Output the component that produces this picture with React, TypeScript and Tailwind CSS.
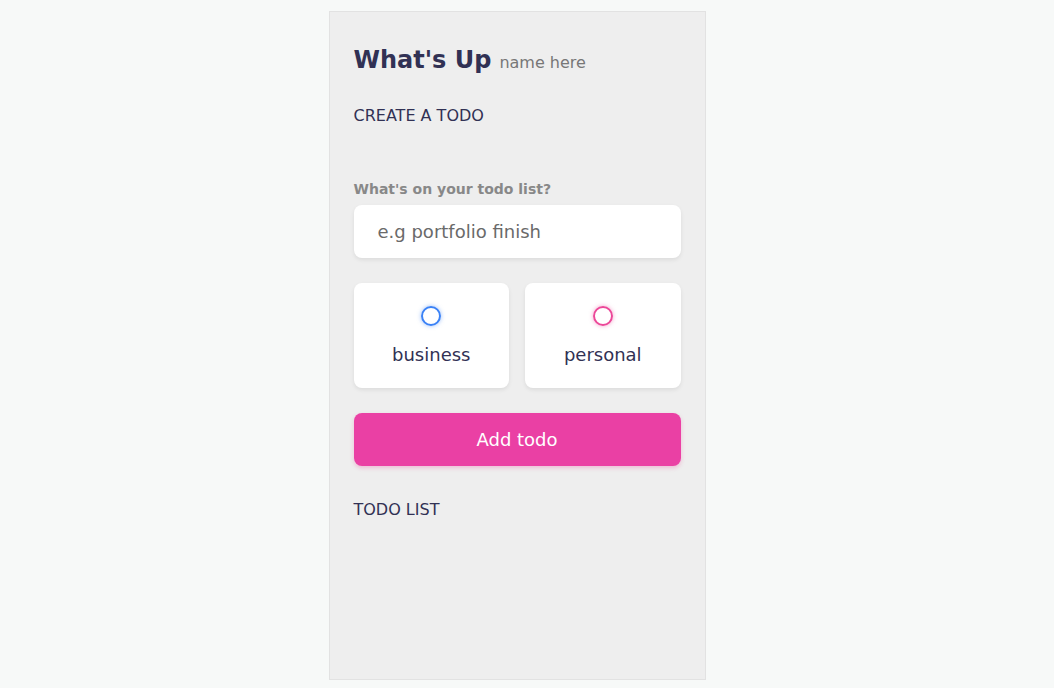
import React from "react";

export default function App() {
  return (
    <div
      className="min-h-screen w-full bg-[#f7f9f8] flex justify-center pt-[11px] pr-5"
      style={{ fontFamily: '"DejaVu Sans", Verdana, sans-serif' }}
    >
      <div className="w-[377px] h-[669px] border border-[#e2e2e2] bg-[#eeeeee] px-6 pt-[30px] text-[#313154]">
        <div className="flex items-baseline h-9">
          <h1 className="text-[24px] leading-9 font-bold">What's Up</h1>
          <span className="ml-2 text-[16px] text-[#777777]">name here</span>
        </div>
        <h2 className="mt-[26px] text-[16px] leading-6">CREATE A TODO</h2>
        <label className="block mt-[51px] text-[14px] leading-5 font-bold text-[#888888]">
          What's on your todo list?
        </label>
        <input
          type="text"
          placeholder="e.g portfolio finish"
          className="mt-[6px] block w-full h-[53px] rounded-lg bg-white px-6 text-[18px] text-[#313154] placeholder:text-[#6a6a6a] shadow-[0_2px_4px_rgba(0,0,0,0.08)] outline-none"
        />
        <div className="mt-[25px] grid grid-cols-2 gap-4">
          <div className="h-[105px] rounded-lg bg-white shadow-[0_2px_4px_rgba(0,0,0,0.08)] flex flex-col items-center pt-[23px]">
            <span className="w-5 h-5 rounded-full border-2 border-[#3b82f6] shadow-[0_0_4px_rgba(59,130,246,0.5)]" />
            <span className="mt-[15px] text-[18px] leading-[27px]">business</span>
          </div>
          <div className="h-[105px] rounded-lg bg-white shadow-[0_2px_4px_rgba(0,0,0,0.08)] flex flex-col items-center pt-[23px]">
            <span className="w-5 h-5 rounded-full border-2 border-[#ec4899] shadow-[0_0_4px_rgba(236,72,153,0.5)]" />
            <span className="mt-[15px] text-[18px] leading-[27px]">personal</span>
          </div>
        </div>
        <button className="mt-[25px] block w-full h-[53px] rounded-lg bg-[#ea40a4] text-white text-[18px] font-medium shadow-[0_2px_4px_rgba(236,72,153,0.3)]">
          Add todo
        </button>
        <h2 className="mt-[32px] text-[16px] leading-6">TODO LIST</h2>
      </div>
    </div>
  );
}
